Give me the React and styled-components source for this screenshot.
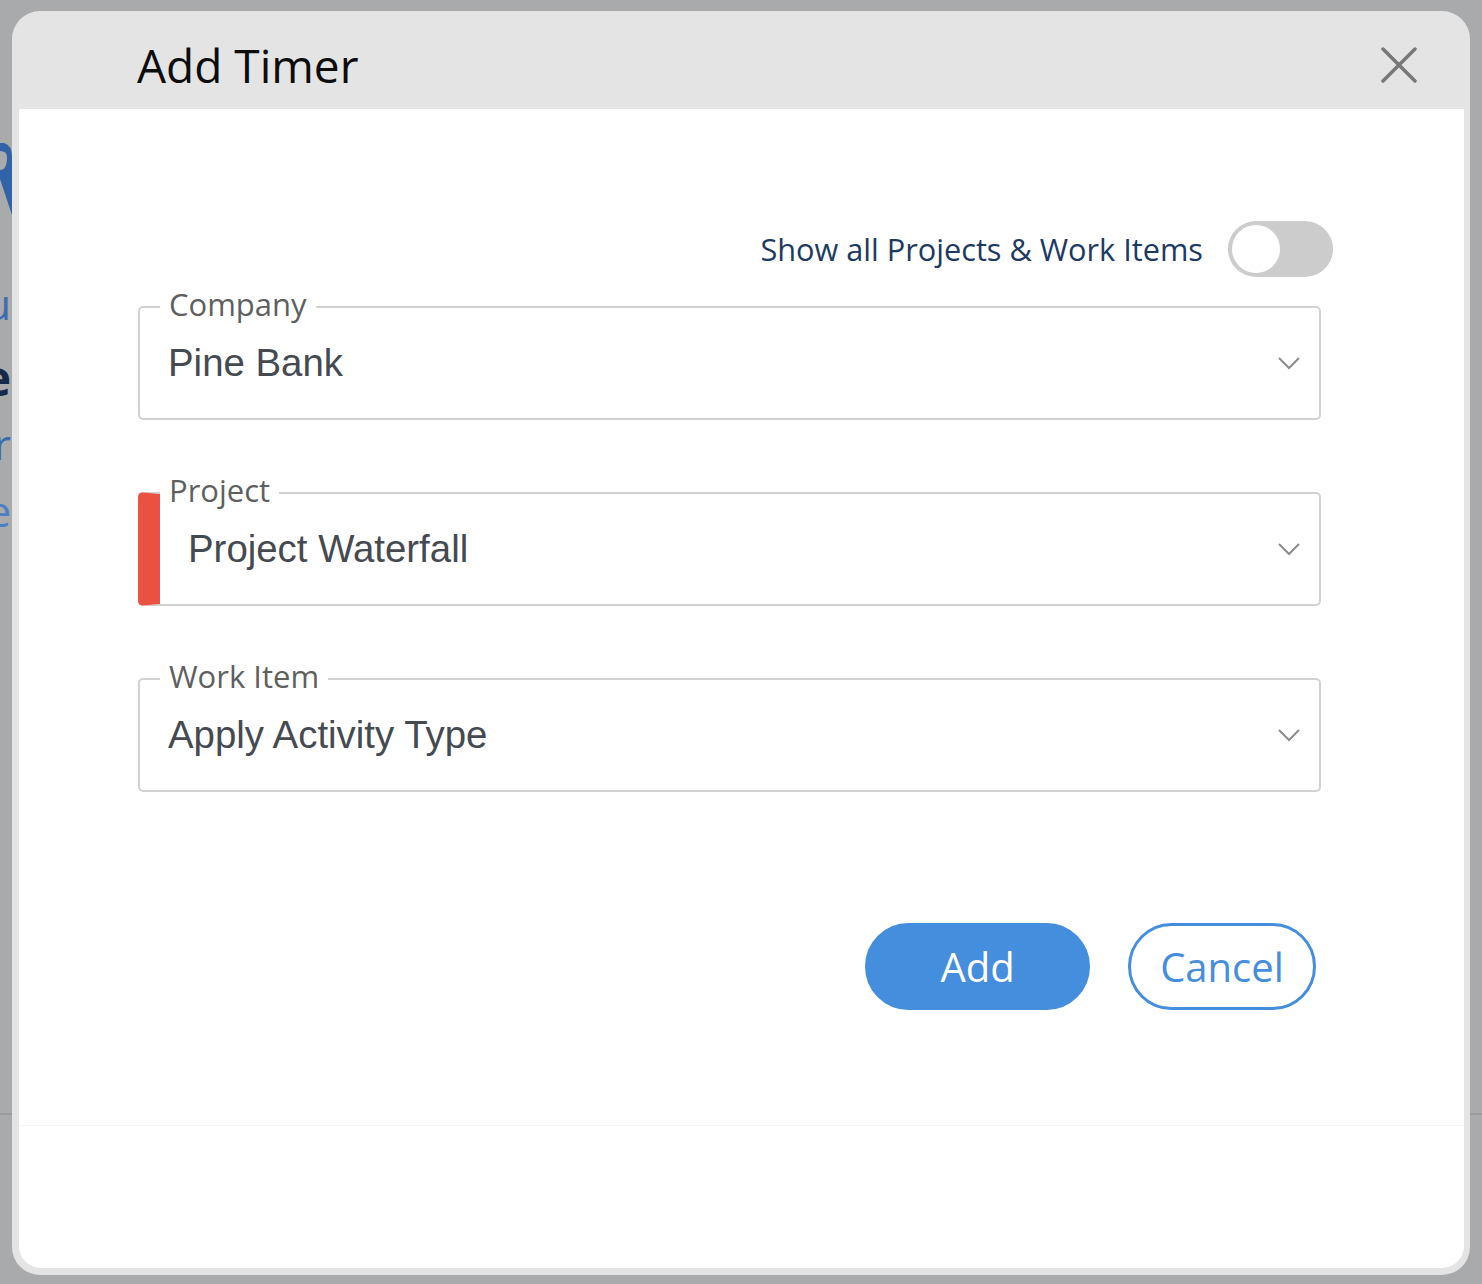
import React from "react";
import styled, { createGlobalStyle } from "styled-components";

const Global = createGlobalStyle`
  html, body { margin: 0; padding: 0; background: #a9aaac; }
  body { font-family: "Open Sans", "Noto Sans", sans-serif; }
  * { box-sizing: border-box; }
`;

const Screen = styled.div`
  display: flex;
  width: 1482px;
  height: 1284px;
  background: #a9aaac;
  overflow: hidden;
`;

const SideStrip = styled.div`
  width: 12px;
  flex: none;
  display: flex;
  flex-direction: column;
  overflow: hidden;
`;

const LogoPiece = styled.svg`
  display: block;
  margin-top: 143px;
  flex: none;
`;

const Glyph = styled.div`
  display: flex;
  justify-content: flex-end;
  height: 50px;
  line-height: 50px;
  margin-top: ${(p) => p.$gap}px;
  font-family: "Open Sans", sans-serif;
  font-size: ${(p) => (p.$bold ? 48 : 42)}px;
  font-weight: ${(p) => (p.$bold ? 700 : 400)};
  color: ${(p) => p.$color};
  white-space: nowrap;
  margin-right: 1px;
  flex: none;
`;

const PageRule = styled.div`
  height: 2px;
  flex: none;
  margin-top: ${(p) => p.$gap}px;
  background: #9a9b9d;
`;

const Center = styled.div`
  width: 1458px;
  flex: none;
  padding: 11px 0 9px;
`;

const Modal = styled.div`
  height: 100%;
  background: #e4e4e4;
  border-radius: 28px;
  padding: 0 6px 7px 7px;
  display: flex;
  flex-direction: column;
`;

const Header = styled.div`
  height: 98px;
  flex: none;
  display: flex;
  align-items: center;
  justify-content: space-between;
  padding: 9px 47px 0 118px;
`;

const Title = styled.h1`
  margin: 0;
  font-family: "Open Sans", sans-serif;
  font-weight: 400;
  font-size: 46px;
  line-height: 60px;
  color: #0d0d0d;
`;

const CloseButton = styled.button`
  width: 36px;
  height: 36px;
  padding: 0;
  border: none;
  background: transparent;
  display: flex;
  cursor: pointer;
`;

const Body = styled.div`
  flex: 1;
  background: #ffffff;
  border-radius: 0 0 22px 22px;
  display: flex;
  flex-direction: column;
`;

const Content = styled.div`
  padding: 112px 143px 0 119px;
  height: 1016px;
  flex: none;
  display: flex;
  flex-direction: column;
`;

const Footer = styled.div`
  flex: 1;
  border-top: 1px solid #f4f4f4;
`;

const ToggleRow = styled.div`
  display: flex;
  align-items: center;
  justify-content: flex-end;
  gap: 25px;
  height: 56px;
  margin-right: -12px;
  margin-bottom: 29px;
`;

const ToggleLabel = styled.span`
  font-family: "Open Sans", sans-serif;
  font-size: 30.7px;
  color: #1c3a62;
`;

const Track = styled.div`
  width: 105px;
  height: 56px;
  border-radius: 28px;
  background: #cccccc;
  padding: 4px;
  display: flex;
  align-items: center;
`;

const Knob = styled.div`
  width: 48px;
  height: 48px;
  border-radius: 50%;
  background: #ffffff;
`;

const Field = styled.div`
  position: relative;
  height: 114px;
  flex: none;
  border: 2px solid #d2d2d2;
  border-left: ${(p) => (p.$flag ? `22px solid ${p.$flag}` : "2px solid #d2d2d2")};
  border-radius: 5px;
  display: flex;
  align-items: center;
  justify-content: space-between;
  padding: 0 18px 0 28px;
  margin-bottom: ${(p) => p.$mb || 0}px;
`;

const Legend = styled.span`
  position: absolute;
  top: -22px;
  left: ${(p) => p.$left}px;
  padding: 0 9px;
  background: #ffffff;
  font-family: "Open Sans", sans-serif;
  font-size: 31px;
  line-height: 36px;
  color: #5f5f5f;
`;

const Value = styled.span`
  font-family: "Liberation Sans", Arial, sans-serif;
  font-size: 38.4px;
  color: #454a51;
`;

const Chevron = styled.svg`
  display: block;
  flex: none;
`;

const Actions = styled.div`
  display: flex;
  justify-content: flex-end;
  gap: 38px;
  margin-top: 131px;
  margin-right: 5px;
`;

const Button = styled.button`
  height: 87px;
  width: ${(p) => p.$w}px;
  border-radius: 44px;
  font-family: "Open Sans", sans-serif;
  font-size: 40px;
  line-height: 1;
  padding: 0;
  cursor: pointer;
  border: 3px solid #458ddd;
  background: ${(p) => (p.$primary ? "#458ddd" : "#ffffff")};
  color: ${(p) => (p.$primary ? "#ffffff" : "#458ddd")};
`;

const Down = () => (
  <Chevron width="24" height="14" viewBox="0 0 24 14">
    <path d="M2 2 L12 12 L22 2" fill="none" stroke="#8c8c8c" strokeWidth="2" />
  </Chevron>
);

const SelectField = ({ label, value, flag, mb }) => (
  <Field $flag={flag} $mb={mb}>
    <Legend $left={flag ? 0 : 20}>{label}</Legend>
    <Value>{value}</Value>
    <Down />
  </Field>
);

export default function App() {
  return (
    <>
      <Global />
      <Screen>
        <SideStrip>
          <LogoPiece width="12" height="72" viewBox="0 0 12 72">
            <path
              d="M0 0 H4 Q12 2 12 14 V72 L0 36 V27 Q7 27 7 14 Q7 8 0 8 Z"
              fill="#3163a6"
            />
          </LogoPiece>
          <Glyph $gap={64} $color="#3d6cb0">Menu</Glyph>
          <Glyph $gap={24} $color="#17294a" $bold>Home</Glyph>
          <Glyph $gap={16} $color="#3a6bb1">Timer</Glyph>
          <Glyph $gap={17} $color="#4a7fc4">More</Glyph>
          <PageRule $gap={577} />
        </SideStrip>
        <Center>
          <Modal>
            <Header>
              <Title>Add Timer</Title>
              <CloseButton aria-label="Close">
                <svg width="36" height="36" viewBox="0 0 36 36">
                  <path
                    d="M2 2 L34 34 M34 2 L2 34"
                    stroke="#777777"
                    strokeWidth="3.5"
                    strokeLinecap="round"
                  />
                </svg>
              </CloseButton>
            </Header>
            <Body>
              <Content>
                <ToggleRow>
                  <ToggleLabel>Show all Projects &amp; Work Items</ToggleLabel>
                  <Track>
                    <Knob />
                  </Track>
                </ToggleRow>
                <SelectField label="Company" value="Pine Bank" mb={72} />
                <SelectField label="Project" value="Project Waterfall" flag="#ea5141" mb={72} />
                <SelectField label="Work Item" value="Apply Activity Type" />
                <Actions>
                  <Button $primary $w={225}>Add</Button>
                  <Button $w={188}>Cancel</Button>
                </Actions>
              </Content>
              <Footer />
            </Body>
          </Modal>
        </Center>
        <SideStrip>
          <PageRule $gap={1113} />
        </SideStrip>
      </Screen>
    </>
  );
}
